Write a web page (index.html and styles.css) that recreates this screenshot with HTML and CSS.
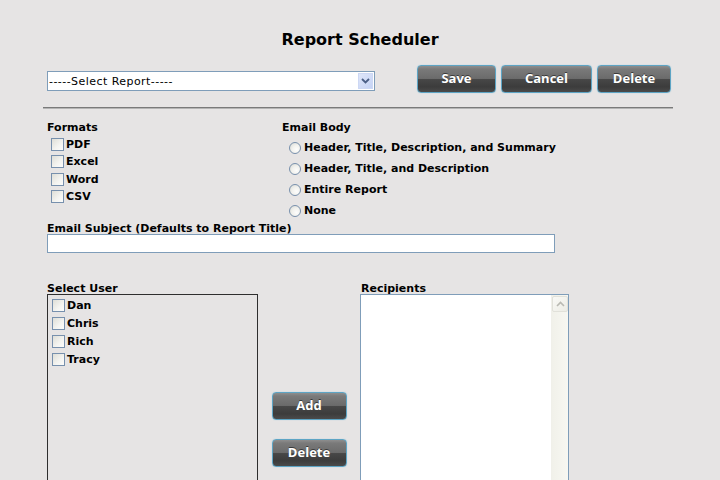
FILE: index.html
```html
<!DOCTYPE html>
<html>
<head>
<meta charset="utf-8">
<title>Report Scheduler</title>
<link rel="stylesheet" href="styles.css">
</head>
<body>
<div class="page">
  <h1 class="title">Report Scheduler</h1>

  <div class="toolbar">
    <div class="select-box">
      <select class="report-select"><option>-----Select Report-----</option></select>
      <span class="select-arrow"><svg width="9" height="6" viewBox="0 0 9 6"><path d="M1 1 L4.5 4.5 L8 1" fill="none" stroke="#4b5f86" stroke-width="1.8"/></svg></span>
    </div>
    <div class="actions">
      <button class="btn btn-save">Save</button>
      <button class="btn btn-cancel">Cancel</button>
      <button class="btn btn-delete">Delete</button>
    </div>
  </div>

  <hr class="divider">

  <div class="options">
    <div class="formats">
      <div class="label">Formats</div>
      <label class="check-row"><input type="checkbox" class="cb"><span>PDF</span></label>
      <label class="check-row"><input type="checkbox" class="cb"><span>Excel</span></label>
      <label class="check-row"><input type="checkbox" class="cb"><span>Word</span></label>
      <label class="check-row"><input type="checkbox" class="cb"><span>CSV</span></label>
    </div>
    <div class="body-opts">
      <div class="label">Email Body</div>
      <label class="radio-row"><input type="radio" name="body" class="rb"><span>Header, Title, Description, and Summary</span></label>
      <label class="radio-row"><input type="radio" name="body" class="rb"><span>Header, Title, and Description</span></label>
      <label class="radio-row"><input type="radio" name="body" class="rb"><span>Entire Report</span></label>
      <label class="radio-row"><input type="radio" name="body" class="rb"><span>None</span></label>
    </div>
  </div>

  <div class="subject">
    <div class="label tight">Email Subject (Defaults to Report Title)</div>
    <input class="subject-input" type="text">
  </div>

  <div class="users">
    <div class="label tight">Select User</div>
    <div></div>
    <div class="label tight recip-label">Recipients</div>

    <div class="user-list">
      <label class="user-row"><input type="checkbox" class="cb"><span>Dan</span></label>
      <label class="user-row"><input type="checkbox" class="cb"><span>Chris</span></label>
      <label class="user-row"><input type="checkbox" class="cb"><span>Rich</span></label>
      <label class="user-row"><input type="checkbox" class="cb"><span>Tracy</span></label>
    </div>
    <div class="mid-actions">
      <button class="btn btn-small">Add</button>
      <button class="btn btn-small">Delete</button>
    </div>
    <div class="recipients">
      <div class="recip-area"></div>
      <div class="scrollbar">
        <span class="scroll-up"><svg width="9" height="6" viewBox="0 0 9 6"><path d="M1 5 L4.5 1.5 L8 5" fill="none" stroke="#b9b9b2" stroke-width="1.6"/></svg></span>
      </div>
    </div>
  </div>
</div>
</body>
</html>
```

FILE: styles.css
```css
html, body {
  margin: 0;
  padding: 0;
}
body {
  background: #e6e4e4;
  font-family: "DejaVu Sans", Verdana, sans-serif;
  font-size: 11px;
  color: #000;
}
.page {
  width: 720px;
  height: 480px;
  overflow: hidden;
}
.title {
  margin: 0;
  padding-top: 30px;
  font-size: 16px;
  line-height: 20px;
  font-weight: bold;
  text-align: center;
}
.toolbar {
  display: flex;
  align-items: flex-start;
  margin-top: 15px;
  padding-left: 47px;
  height: 28px;
}
.select-box {
  margin-top: 6px;
  width: 328px;
  height: 20px;
  box-sizing: border-box;
  border: 1px solid #7f9db9;
  background: #fff;
  display: flex;
  align-items: stretch;
}
.report-select {
  flex: 1;
  appearance: none;
  -webkit-appearance: none;
  border: 0;
  background: transparent;
  font-family: "DejaVu Sans", Verdana, sans-serif;
  font-size: 11px;
  letter-spacing: 0.45px;
  padding: 0 0 0 1px;
  margin: 0;
  color: #000;
  outline: none;
}
.select-arrow {
  width: 15px;
  margin: 1px;
  box-sizing: border-box;
  border: 1px solid #cdd8f4;
  background: linear-gradient(135deg, #dfe6f9, #c5d3f5);
  display: flex;
  align-items: center;
  justify-content: center;
}
.actions {
  display: flex;
  gap: 5px;
  margin-left: 42px;
}
.btn {
  height: 28px;
  box-sizing: border-box;
  border: 1px solid #5da4c4;
  border-radius: 4px;
  box-shadow: 0 0 1px 0 #8cc4dc;
  background: linear-gradient(#8e8e8e 0%, #7a7a7a 12%, #6b6b6b 48%, #474747 52%, #3c3c3c 80%, #4a4a4a 100%);
  color: #fff;
  font-family: "Open Sans", "DejaVu Sans", sans-serif;
  font-weight: bold;
  font-size: 13px;
  line-height: 1;
  text-shadow: 0 -1px 0 #3a3a3a;
  padding: 0 0 2px;
  cursor: pointer;
}
.btn-save { width: 79px; }
.btn-cancel { width: 91px; }
.btn-delete { width: 74px; }
.btn-small { width: 75px; }

.divider {
  margin: 14px 0 0 43px;
  width: 630px;
  height: 0;
  border: 0;
  border-top: 1px solid #7a7a7a;
  border-bottom: 1px solid #b4b4b4;
}

.label {
  font-weight: bold;
  line-height: 13px;
}
.label.tight {
  line-height: 11px;
}
.options {
  display: grid;
  grid-template-columns: 235px auto;
  padding-left: 47px;
  margin-top: 12px;
}
.formats .label { margin-bottom: 1.5px; }
.body-opts .label { margin-bottom: 3px; }

.check-row, .radio-row, .user-row {
  display: flex;
  align-items: center;
  font-weight: bold;
}
.check-row {
  height: 17.5px;
  padding-left: 4px;
}
.radio-row {
  height: 21px;
  padding-left: 7px;
}
.user-row {
  height: 18px;
  padding-left: 4px;
}
.cb {
  appearance: none;
  -webkit-appearance: none;
  width: 13px;
  height: 13px;
  margin: 0 2px 0 0;
  box-sizing: border-box;
  border: 1px solid #7790ad;
  background: linear-gradient(135deg, #deded7, #f4f4f1 60%, #fcfcfb);
}
.rb {
  appearance: none;
  -webkit-appearance: none;
  width: 12px;
  height: 12px;
  margin: 0 3px 0 0;
  box-sizing: border-box;
  border: 1px solid #7890ac;
  border-radius: 50%;
  background: radial-gradient(circle at 65% 65%, #fdfdfc 0%, #f2f2ee 45%, #d6d7d1 100%);
}

.subject {
  margin-top: 2px;
  padding-left: 47px;
}
.subject .label {
  margin-bottom: 0;
}
.subject-input {
  display: block;
  margin: 0;
  width: 508px;
  height: 19px;
  box-sizing: border-box;
  border: 1px solid #7f9db9;
  background: #fff;
  padding: 0 2px;
  font-family: "DejaVu Sans", Verdana, sans-serif;
  font-size: 11px;
}

.users {
  display: grid;
  grid-template-columns: 211px 102px 209px;
  grid-template-rows: auto auto;
  padding-left: 47px;
  margin-top: 30px;
}
.recip-label {
  padding-left: 1px;
}
.user-list {
  height: 200px;
  box-sizing: border-box;
  border: 1px solid #2e2e2e;
  padding-top: 1px;
}
.mid-actions {
  display: flex;
  flex-direction: column;
  align-items: center;
  gap: 19px;
  padding-top: 98px;
}
.recipients {
  height: 200px;
  box-sizing: border-box;
  border: 1px solid #7f9db9;
  background: #fff;
  display: flex;
}
.recip-area {
  flex: 1;
}
.scrollbar {
  width: 16px;
  background: linear-gradient(90deg, #f1f1ea, #f7f7f2);
  border-left: 1px solid #f0f0ea;
}
.scroll-up {
  display: flex;
  align-items: center;
  justify-content: center;
  height: 16px;
  margin-top: 1px;
  box-sizing: border-box;
  border: 1px solid #e1e1da;
  border-radius: 2px;
  background: linear-gradient(135deg, #f9f9f6, #ececE5);
}
```
